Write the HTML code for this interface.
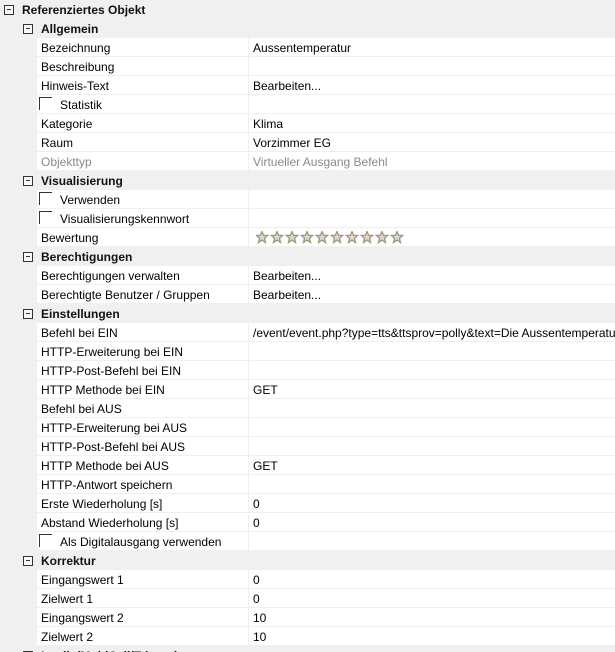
<!DOCTYPE html>
<html style="width:615px;height:652px;overflow:hidden"><head><meta charset="utf-8"><style>
body{margin:0;width:615px;height:652px;overflow:hidden;background:#f0f0f0;font-family:"Liberation Sans",sans-serif;font-size:12px;color:#000;position:relative}
.r{position:absolute;left:0;width:615px;height:19px;line-height:18px}
.w{position:absolute;left:37px;right:0;top:0;height:18px;background:#fff}
.sep{position:absolute;left:248px;top:0;width:1px;height:18px;background:#f0f0f0}
.l{position:absolute;left:41px;top:1px;white-space:nowrap}
.v{position:absolute;left:253px;top:1px;white-space:nowrap}
.c{font-weight:bold;color:#111}
.g{color:#8a8a8a}
.box{position:absolute;width:8px;height:8px;border:1px solid #333;background:#f7f7f7}
.box:after{content:"";position:absolute;left:2px;top:3px;width:4px;height:1px;background:#333}
.cb{position:absolute;left:39px;top:2px;width:12px;height:12px;border-left:1px solid #333;border-top:1px solid #333}
.cbl{left:60px}
</style></head><body>

<div class="r" style="top:0"><div class="box" style="left:4px;top:5px"></div><div class="l c" style="left:22px">Referenziertes Objekt</div></div>
<div class="r" style="top:19px"><div class="box" style="left:23px;top:5px"></div><div class="l c">Allgemein</div></div>
<div class="r" style="top:38px"><div class="w"></div><div class="sep"></div><div class="l">Bezeichnung</div><div class="v">Aussentemperatur</div></div>
<div class="r" style="top:57px"><div class="w"></div><div class="sep"></div><div class="l">Beschreibung</div></div>
<div class="r" style="top:76px"><div class="w"></div><div class="sep"></div><div class="l">Hinweis-Text</div><div class="v">Bearbeiten...</div></div>
<div class="r" style="top:95px"><div class="w"></div><div class="sep"></div><div class="cb"></div><div class="l cbl">Statistik</div></div>
<div class="r" style="top:114px"><div class="w"></div><div class="sep"></div><div class="l">Kategorie</div><div class="v">Klima</div></div>
<div class="r" style="top:133px"><div class="w"></div><div class="sep"></div><div class="l">Raum</div><div class="v">Vorzimmer EG</div></div>
<div class="r" style="top:152px"><div class="w"></div><div class="sep"></div><div class="l g">Objekttyp</div><div class="v g">Virtueller Ausgang Befehl</div></div>
<div class="r" style="top:171px"><div class="box" style="left:23px;top:5px"></div><div class="l c">Visualisierung</div></div>
<div class="r" style="top:190px"><div class="w"></div><div class="sep"></div><div class="cb"></div><div class="l cbl">Verwenden</div></div>
<div class="r" style="top:209px"><div class="w"></div><div class="sep"></div><div class="cb"></div><div class="l cbl">Visualisierungskennwort</div></div>
<div class="r" style="top:228px"><div class="w"></div><div class="sep"></div><div class="l">Bewertung</div>
<svg style="position:absolute;left:256px;top:3px" width="150" height="13">
<defs><polygon id="s" points="6,0.5 7.6,4.3 11.6,4.5 8.5,7.1 9.5,11.5 6,9.1 2.5,11.5 3.5,7.1 0.4,4.5 4.4,4.3" fill="#ddd8c8" stroke="#9d977f" stroke-width="1.3"/></defs>
<use href="#s" x="0"/><use href="#s" x="15"/><use href="#s" x="30"/><use href="#s" x="45"/><use href="#s" x="60"/><use href="#s" x="75"/><use href="#s" x="90"/><use href="#s" x="105"/><use href="#s" x="120"/><use href="#s" x="135"/>
</svg></div>
<div class="r" style="top:247px"><div class="box" style="left:23px;top:5px"></div><div class="l c">Berechtigungen</div></div>
<div class="r" style="top:266px"><div class="w"></div><div class="sep"></div><div class="l">Berechtigungen verwalten</div><div class="v">Bearbeiten...</div></div>
<div class="r" style="top:285px"><div class="w"></div><div class="sep"></div><div class="l">Berechtigte Benutzer / Gruppen</div><div class="v">Bearbeiten...</div></div>
<div class="r" style="top:304px"><div class="box" style="left:23px;top:5px"></div><div class="l c">Einstellungen</div></div>
<div class="r" style="top:323px"><div class="w"></div><div class="sep"></div><div class="l">Befehl bei EIN</div><div class="v">/event/event.php?type=tts&amp;ttsprov=polly&amp;text=Die Aussentemperatur</div></div>
<div class="r" style="top:342px"><div class="w"></div><div class="sep"></div><div class="l">HTTP-Erweiterung bei EIN</div></div>
<div class="r" style="top:361px"><div class="w"></div><div class="sep"></div><div class="l">HTTP-Post-Befehl bei EIN</div></div>
<div class="r" style="top:380px"><div class="w"></div><div class="sep"></div><div class="l">HTTP Methode bei EIN</div><div class="v">GET</div></div>
<div class="r" style="top:399px"><div class="w"></div><div class="sep"></div><div class="l">Befehl bei AUS</div></div>
<div class="r" style="top:418px"><div class="w"></div><div class="sep"></div><div class="l">HTTP-Erweiterung bei AUS</div></div>
<div class="r" style="top:437px"><div class="w"></div><div class="sep"></div><div class="l">HTTP-Post-Befehl bei AUS</div></div>
<div class="r" style="top:456px"><div class="w"></div><div class="sep"></div><div class="l">HTTP Methode bei AUS</div><div class="v">GET</div></div>
<div class="r" style="top:475px"><div class="w"></div><div class="sep"></div><div class="l">HTTP-Antwort speichern</div></div>
<div class="r" style="top:494px"><div class="w"></div><div class="sep"></div><div class="l">Erste Wiederholung [s]</div><div class="v">0</div></div>
<div class="r" style="top:513px"><div class="w"></div><div class="sep"></div><div class="l">Abstand Wiederholung [s]</div><div class="v">0</div></div>
<div class="r" style="top:532px"><div class="w"></div><div class="sep"></div><div class="cb"></div><div class="l cbl">Als Digitalausgang verwenden</div></div>
<div class="r" style="top:551px"><div class="box" style="left:23px;top:5px"></div><div class="l c">Korrektur</div></div>
<div class="r" style="top:570px"><div class="w"></div><div class="sep"></div><div class="l">Eingangswert 1</div><div class="v">0</div></div>
<div class="r" style="top:589px"><div class="w"></div><div class="sep"></div><div class="l">Zielwert 1</div><div class="v">0</div></div>
<div class="r" style="top:608px"><div class="w"></div><div class="sep"></div><div class="l">Eingangswert 2</div><div class="v">10</div></div>
<div class="r" style="top:627px"><div class="w"></div><div class="sep"></div><div class="l">Zielwert 2</div><div class="v">10</div></div>
<div class="r" style="top:646px"><div class="box" style="left:23px;top:5px"></div><div class="l c">Logik (MultiCall/Trigger)</div></div>
</body></html>
